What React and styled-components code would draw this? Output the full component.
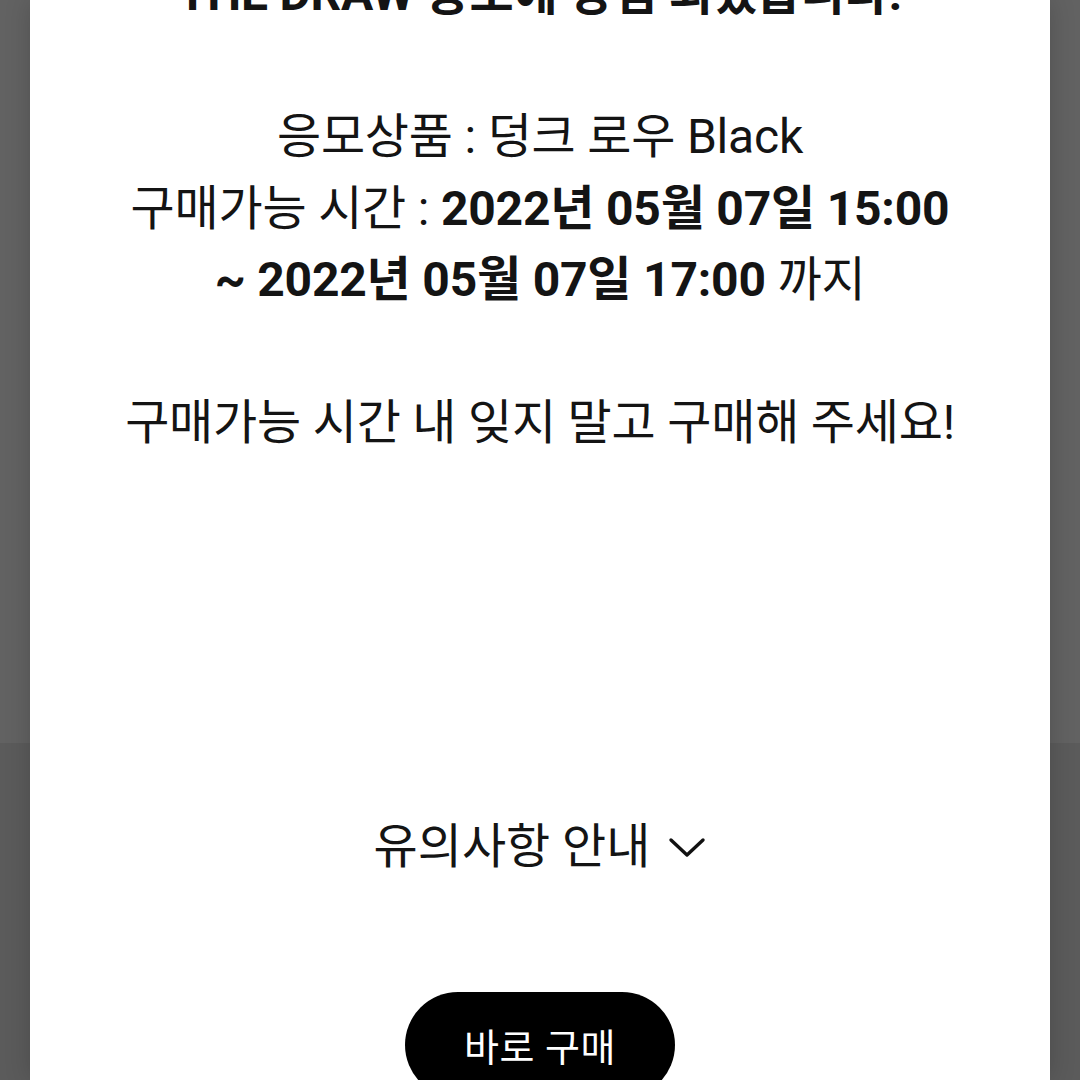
import React from "react";
import styled, { createGlobalStyle } from "styled-components";

const GlobalStyle = createGlobalStyle`
  html, body {
    margin: 0;
    padding: 0;
    height: 100%;
    overflow: hidden;
  }
  body {
    background: linear-gradient(180deg, #626262 0px, #626262 743px, #5b5b5b 743px);
    font-family: Roboto, "Noto Sans CJK KR", sans-serif;
  }
`;

export default function App() {
  return (
    <>
      <GlobalStyle />
      <Sheet>
        <Message>
          <Line>
            <b>THE DRAW 응모에 당첨 되었습니다.</b>
          </Line>
          <Blank />
          <Line>응모상품 : 덩크 로우 Black</Line>
          <Line>
            구매가능 시간 : <b>2022년 05월 07일 15:00</b>
          </Line>
          <Line>
            <b>~ 2022년 05월 07일 17:00</b> 까지
          </Line>
          <Blank />
          <Line>구매가능 시간 내 잊지 말고 구매해 주세요!</Line>
        </Message>
        <NoticeToggle>
          유의사항 안내
          <ChevronDown />
        </NoticeToggle>
        <BuyButton>바로 구매</BuyButton>
      </Sheet>
    </>
  );
}

function ChevronDown() {
  return (
    <svg width="38" height="26" viewBox="0 0 38 26" fill="none">
      <path
        d="M3 6 L19 21 L35 6"
        stroke="#111"
        strokeWidth="3.4"
        strokeLinecap="round"
        strokeLinejoin="round"
      />
    </svg>
  );
}

const Sheet = styled.main`
  width: 1020px;
  height: 1080px;
  margin: 0 auto;
  background: #fff;
  box-shadow: 0 0 24px rgba(0, 0, 0, 0.18);
  display: flex;
  flex-direction: column;
  align-items: center;
  overflow: hidden;
`;

const Message = styled.div`
  margin-top: -42px;
  text-align: center;
  color: #141414;
  font-size: 48px;
  line-height: 71.5px;
  letter-spacing: -0.2px;

  b {
    font-weight: 700;
  }
`;

const Line = styled.div`
  white-space: nowrap;
`;

const Blank = styled.div`
  height: 71.5px;
`;

const NoticeToggle = styled.button`
  margin-top: 358px;
  border: 0;
  background: none;
  padding: 0;
  display: flex;
  align-items: center;
  gap: 18px;
  font-family: inherit;
  font-size: 48px;
  line-height: 60px;
  color: #141414;
  cursor: pointer;
`;

const BuyButton = styled.button`
  margin-top: 115px;
  width: 270px;
  height: 106px;
  flex-shrink: 0;
  border: 0;
  border-radius: 53px;
  background: #000;
  color: #fff;
  font-family: inherit;
  font-size: 38px;
  letter-spacing: 0.5px;
  padding-bottom: 2px;
  cursor: pointer;
`;
